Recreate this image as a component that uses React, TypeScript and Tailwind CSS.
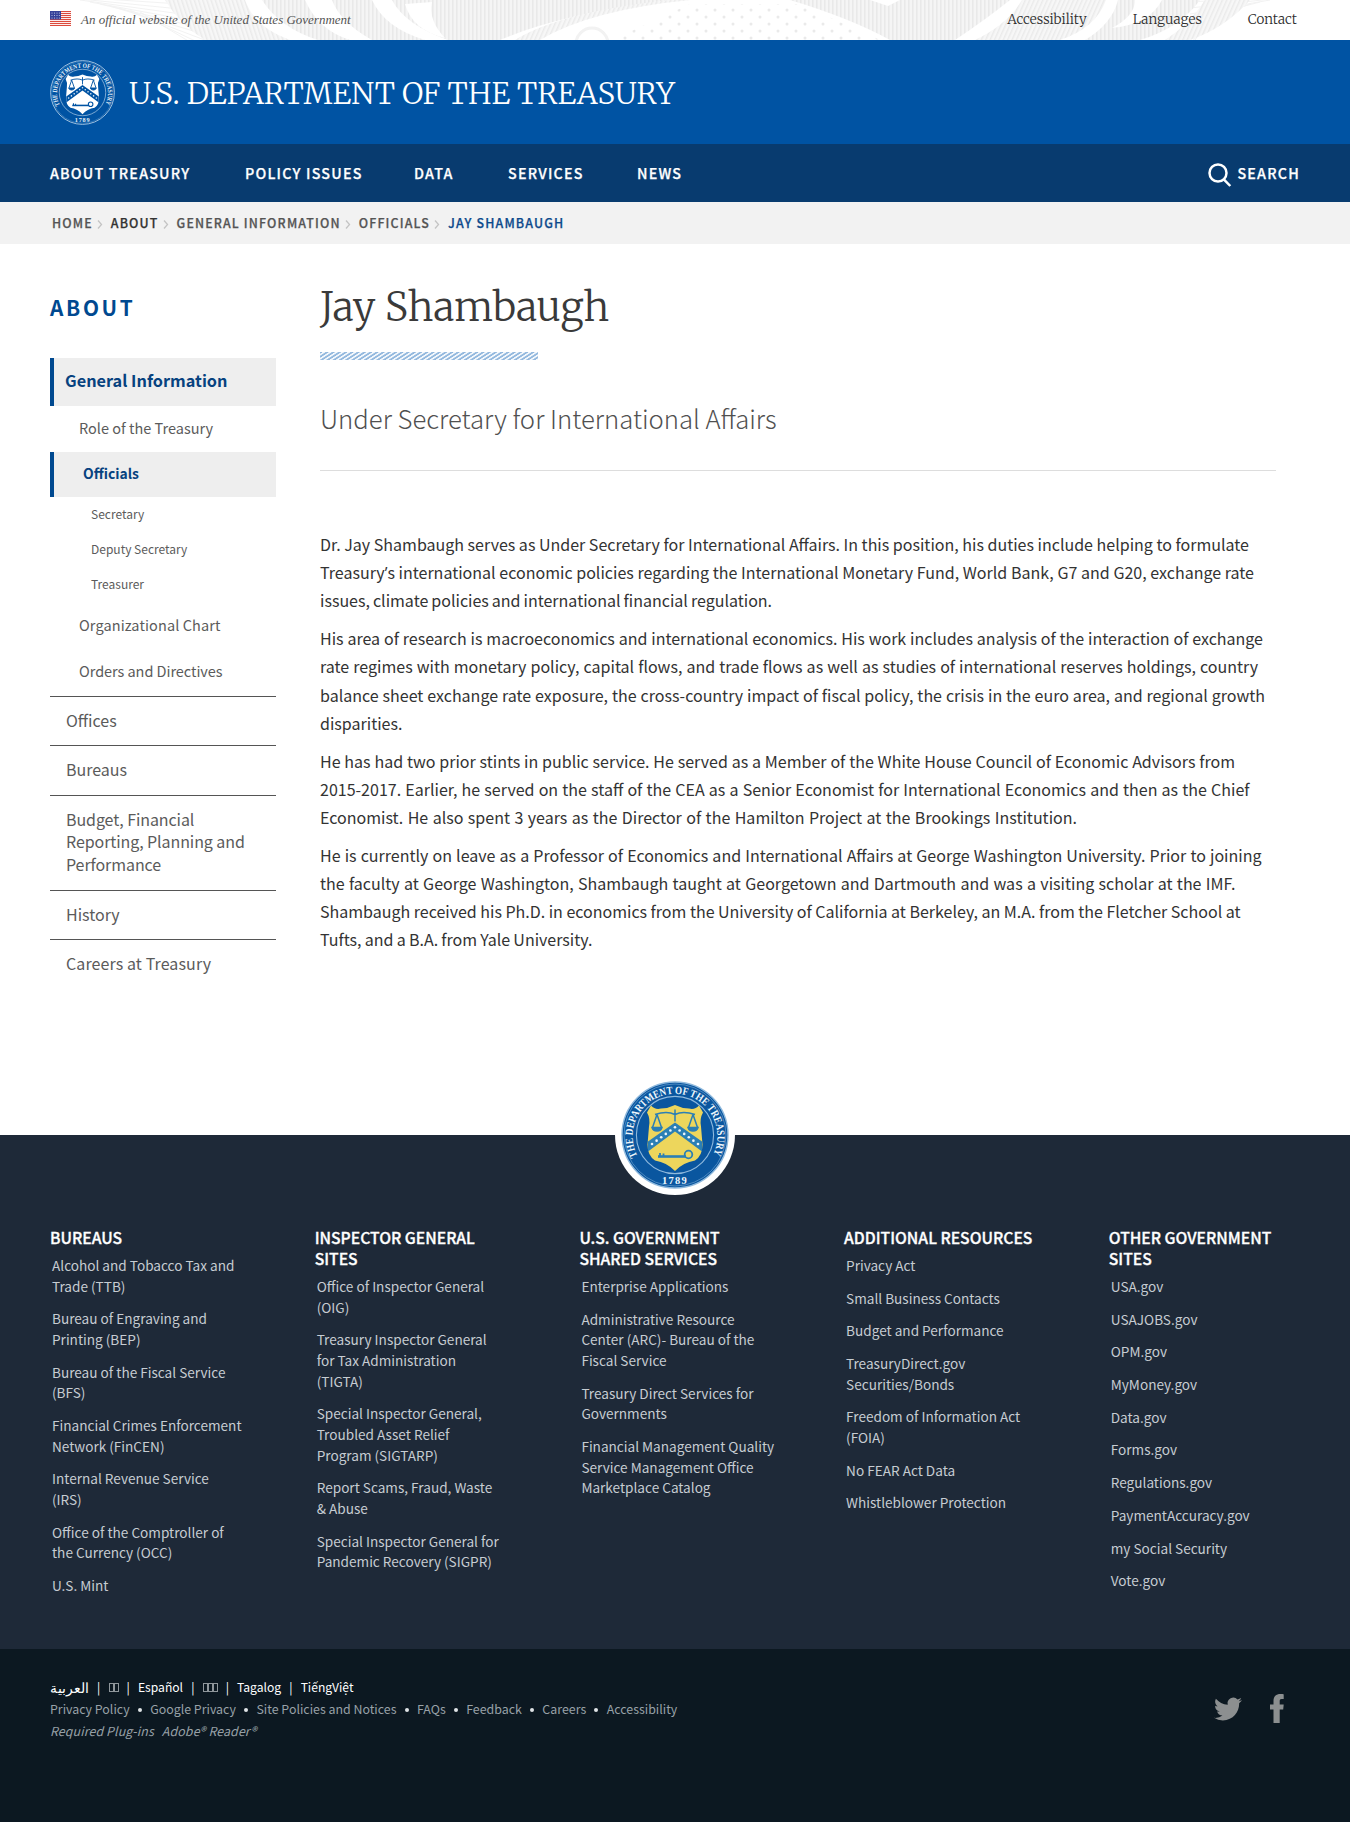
import { Fragment, type ReactNode } from "react";

type SealColors = { field: string; line: string; shield: string; device: string; star: string; ring: string };

function Seal({ id, size, c }: { id: string; size: number; c: SealColors }) {
  return (
    <svg width={size} height={size} viewBox="-54 -54 108 108" className="block shrink-0">
      <defs>
        <path id={id} d="M-37.500 21 A42.4 42.4 0 1 1 37.500 21" />
      </defs>
      <circle r="53" fill={c.field} stroke={c.line} strokeWidth="1.4" />
      <circle r="51" fill="none" stroke={c.ring} strokeWidth="0.8" />
      <circle r="38.6" fill="none" stroke={c.line} strokeWidth="1.1" />
      <text fill={c.star} fontSize="11" fontWeight="700" fontFamily="Liberation Serif, serif">
        <textPath href={`#${id}`} textLength="172" lengthAdjust="spacingAndGlyphs">THE DEPARTMENT OF THE TREASURY</textPath>
      </text>
      <text y="49" textAnchor="middle" fill={c.star} fontSize="10.500" fontWeight="700" letterSpacing="1.2" fontFamily="Liberation Serif, serif">1789</text>
      <g transform="translate(0 1.500)">
        <path d="M-24 -31 Q-20 -26.500 -14 -28 Q-7 -28 0 -31.500 Q7 -28 14 -28 Q20 -26.500 24 -31 L28 -24 Q24.500 -18 26 -10 L27.500 8 Q27.500 19 20 24 Q8 26 0 34.500 Q-8 26 -20 24 Q-27.500 19 -27.500 8 L-26 -10 Q-24.500 -18 -28 -24 Z" fill={c.shield} />
        <path d="M-27 15 L0 -5 L27 15 L27 5 L0 -14 L-27 5 Z" fill={c.device} />
        {[-23, -18.4, -13.8, -9.2, -4.6, 0, 4.6, 9.2, 13.8, 18.4, 23].map((x) => (
          <circle key={x} cx={x} cy={-9.3 + Math.abs(x) * 0.73} r="1.3" fill={c.star} />
        ))}
        <g fill="none" stroke={c.device} strokeWidth="1.5">
          <path d="M-20 -22 Q-8 -26 0 -22 Q8 -26 20 -22 M0 -27 V-15 M-18 -22 L-22.500 -9 M-18 -22 L-13.500 -9 M18 -22 L13.500 -9 M18 -22 L22.500 -9" />
          <path d="M-23 -9 H-13 Q-14 -5.500 -18 -5.500 Q-22 -5.500 -23 -9 Z M23 -9 H13 Q14 -5.500 18 -5.500 Q22 -5.500 23 -9 Z" fill={c.device} />
          <path d="M-17 20 H11" strokeWidth="2.600" />
          <circle cx="13.500" cy="18" r="3.800" strokeWidth="1.800" />
          <path d="M-15 20 V16.500 M-11.500 20 V17" strokeWidth="1.800" />
        </g>
      </g>
    </svg>
  );
}

function Flag() {
  return (
    <svg width="21" height="15" viewBox="0 0 21 15" className="block">
      <rect width="21" height="15" fill="#fff" />
      {[0, 2, 4, 6, 8, 10, 12, 14].map((y) => (
        <rect key={y} y={y} width="21" height="1.1" fill="#dc4a3c" />
      ))}
      <rect width="11" height="8.500" fill="#35429a" />
      {[2, 4.5, 7].map((y) => [2, 4.5, 7, 9.3].map((x) => <circle key={`${x}-${y}`} cx={x} cy={y} r="0.5" fill="#dfe3f5" />))}
    </svg>
  );
}

function Engraving() {
  return (
    <svg className="absolute inset-0 opacity-80" width="1350" height="40" viewBox="0 0 1350 40">
      <defs>
        <pattern id="v" width="4" height="4" patternUnits="userSpaceOnUse">
          <rect width="4" height="4" fill="#f3f3f3" />
          <rect width="1.500" height="4" fill="#e4e4e4" />
        </pattern>
        <pattern id="d" width="4" height="4" patternUnits="userSpaceOnUse" patternTransform="rotate(-18)">
          <rect width="4" height="4" fill="#f6f6f6" />
          <rect width="1.500" height="4" fill="#e6e6e6" />
        </pattern>
        <pattern id="u" width="4" height="4" patternUnits="userSpaceOnUse" patternTransform="rotate(24)">
          <rect width="4" height="4" fill="#f6f6f6" />
          <rect width="1.500" height="4" fill="#e6e6e6" />
        </pattern>
        <pattern id="dots" width="18" height="14" patternUnits="userSpaceOnUse">
          <circle cx="4" cy="3" r="1.500" fill="#e6e6e6" />
          <circle cx="13" cy="10" r="1.500" fill="#e6e6e6" />
        </pattern>
      </defs>
      <g stroke="#f0f0f0" strokeWidth="1">
        {[0, 1, 2, 3, 4, 5, 6, 7, 8].map((i) => (
          <path key={i} d={`M${60 + i * 10} ${-4 + i * 2} L210 ${6 + i * 6} M${1290 - i * 10} ${-4 + i * 2} L1190 ${2 + i * 6}`} />
        ))}
      </g>
      <path d="M165 0 H245 Q255 28 290 40 H205 Q180 25 165 0 Z" fill="url(#d)" />
      <path d="M262 0 H372 Q385 28 425 40 H318 Q280 28 262 0 Z" fill="url(#v)" />
      <path d="M305 0 Q318 30 350 40 H372 Q340 22 332 0 Z" fill="#fff" />
      <path d="M392 0 H488 V40 H448 Q405 25 392 0 Z" fill="url(#v)" />
      <path d="M405 4 Q412 30 445 38 Q428 20 432 2 Z" fill="#fff" />
      <path d="M488 0 H670 Q560 14 500 40 H488 Z" fill="url(#v)" />
      <path d="M540 40 Q590 10 690 0 L670 0 Q560 12 515 40 Z" fill="url(#u)" />
      <circle cx="592" cy="44" r="16" fill="none" stroke="#efefef" strokeWidth="3" />
      <path d="M612 40 L690 4 H800 L880 40 Z" fill="url(#dots)" />
      <path d="M790 0 H930 V40 H890 Q850 18 790 0 Z" fill="url(#v)" />
      <path d="M870 0 H900 L888 6 Z" fill="#fff" />
      <path d="M930 0 H1010 Q985 20 955 40 H920 Z" fill="url(#v)" />
      <path d="M1022 0 H1106 Q1096 28 1060 40 H975 Q1008 24 1022 0 Z" fill="url(#u)" />
      <path d="M1118 0 H1200 Q1180 28 1140 40 H1085 Q1112 24 1118 0 Z" fill="url(#v)" />
      <path d="M1135 0 H1162 Q1150 24 1112 28 Q1135 16 1135 0 Z" fill="#fff" />
      <path d="M1205 0 H1250 Q1225 28 1190 40 H1165 Q1190 24 1205 0 Z" fill="url(#u)" />
    </svg>
  );
}

const nav: [string, string][] = [
  ["ABOUT TREASURY", "w-[195px]"],
  ["POLICY ISSUES", "w-[169px]"],
  ["DATA", "w-[94px]"],
  ["SERVICES", "w-[129px]"],
  ["NEWS", ""],
];

const crumbs = ["HOME", "ABOUT", "GENERAL INFORMATION", "OFFICIALS"];

// Each paragraph is a list of set lines with their measure in pixels.
const paragraphs: [string, number][][] = [
  [
    ["Dr. Jay Shambaugh serves as Under Secretary for International Affairs. In this position, his duties include helping to formulate", 929],
    ["Treasury’s international economic policies regarding the International Monetary Fund, World Bank, G7 and G20, exchange rate", 934],
    ["issues, climate policies and international financial regulation.", 451.5],
  ],
  [
    ["His area of research is macroeconomics and international economics. His work includes analysis of the interaction of exchange", 943],
    ["rate regimes with monetary policy, capital flows, and trade flows as well as studies of international reserves holdings, country", 938],
    ["balance sheet exchange rate exposure, the cross-country impact of fiscal policy, the crisis in the euro area, and regional growth", 945],
    ["disparities.", 81],
  ],
  [
    ["He has had two prior stints in public service. He served as a Member of the White House Council of Economic Advisors from", 915],
    ["2015-2017. Earlier, he served on the staff of the CEA as a Senior Economist for International Economics and then as the Chief", 929.5],
    ["Economist. He also spent 3 years as the Director of the Hamilton Project at the Brookings Institution.", 757],
  ],
  [
    ["He is currently on leave as a Professor of Economics and International Affairs at George Washington University. Prior to joining", 941.5],
    ["the faculty at George Washington, Shambaugh taught at Georgetown and Dartmouth and was a visiting scholar at the IMF.", 915.5],
    ["Shambaugh received his Ph.D. in economics from the University of California at Berkeley, an M.A. from the Fletcher School at", 920.5],
    ["Tufts, and a B.A. from Yale University.", 272.5],
  ],
];

function Prose({ text }: { text: string }) {
  return (
    <>
      {text.split("’").map((part, i) => (
        <Fragment key={i}>
          {i > 0 && <span className="font-['Open_Sans',sans-serif] leading-none">’</span>}
          {part}
        </Fragment>
      ))}
    </>
  );
}

const columns: { title: string; links: string[] }[] = [
  {
    title: "BUREAUS",
    links: ["Alcohol and Tobacco Tax and\nTrade (TTB)", "Bureau of Engraving and\nPrinting (BEP)", "Bureau of the Fiscal Service\n(BFS)", "Financial Crimes Enforcement\nNetwork (FinCEN)", "Internal Revenue Service\n(IRS)", "Office of the Comptroller of\nthe Currency (OCC)", "U.S. Mint"],
  },
  {
    title: "INSPECTOR GENERAL\nSITES",
    links: ["Office of Inspector General\n(OIG)", "Treasury Inspector General\nfor Tax Administration\n(TIGTA)", "Special Inspector General,\nTroubled Asset Relief\nProgram (SIGTARP)", "Report Scams, Fraud, Waste\n& Abuse", "Special Inspector General for\nPandemic Recovery (SIGPR)"],
  },
  {
    title: "U.S. GOVERNMENT\nSHARED SERVICES",
    links: ["Enterprise Applications", "Administrative Resource\nCenter (ARC)- Bureau of the\nFiscal Service", "Treasury Direct Services for\nGovernments", "Financial Management Quality\nService Management Office\nMarketplace Catalog"],
  },
  {
    title: "ADDITIONAL RESOURCES",
    links: ["Privacy Act", "Small Business Contacts", "Budget and Performance", "TreasuryDirect.gov\nSecurities/Bonds", "Freedom of Information Act\n(FOIA)", "No FEAR Act Data", "Whistleblower Protection"],
  },
  {
    title: "OTHER GOVERNMENT\nSITES",
    links: ["USA.gov", "USAJOBS.gov", "OPM.gov", "MyMoney.gov", "Data.gov", "Forms.gov", "Regulations.gov", "PaymentAccuracy.gov", "my Social Security", "Vote.gov"],
  },
];

function Boxes({ n }: { n: number }) {
  return (
    <span className="inline-flex items-center">
      {Array.from({ length: n }, (_, i) => (
        <span key={i} className="h-[9px] w-[5px] border border-[#8f969b]" />
      ))}
    </span>
  );
}

const languages: ReactNode[] = [<span className="text-[14px]">العربية</span>, <Boxes n={2} />, "Español", <Boxes n={3} />, "Tagalog", "TiếngViệt"];
const legal = ["Privacy Policy", "Google Privacy", "Site Policies and Notices", "FAQs", "Feedback", "Careers", "Accessibility"];

export default function App() {
  return (
    <div className="h-[1822px] w-[1350px] overflow-hidden bg-white font-['Noto_Sans_CJK_SC',sans-serif] whitespace-nowrap">
      <div className="relative h-10 bg-white">
        <Engraving />
        <div className="relative flex h-10 items-center pl-[50px]">
          <div className="mb-[3px]"><Flag /></div>
          <span className="ml-[10px] font-['Liberation_Serif',serif] text-[13px] text-[#555] italic">An official website of the United States Government</span>
          <div className="ml-auto flex gap-[46px] pr-[53px] font-['Merriweather',serif] text-[13.5px] font-light text-[#2e2e2e]">
            <span>Accessibility</span>
            <span>Languages</span>
            <span>Contact</span>
          </div>
        </div>
      </div>

      <header className="flex h-[104px] items-center bg-[#0053a3] pl-[50px]">
        <Seal id="seal-top" size={65} c={{ field: "#0053a3", line: "#b9d3ea", shield: "#fff", device: "#0053a3", star: "#e6f0f9", ring: "#5f97cb" }} />
        <span className="ml-[14px] pt-1 font-['Merriweather',serif] text-[29.7px] leading-none font-light text-white">U.S. DEPARTMENT OF THE TREASURY</span>
      </header>

      <nav className="flex h-[58px] items-center bg-[#083b6f] pl-[50px] text-[14.3px] font-medium tracking-[1.2px] text-white [-webkit-text-stroke:0.25px]">
        {nav.map(([label, w]) => (
          <span key={label} className={w}>{label}</span>
        ))}
        <div className="ml-auto flex items-center pr-[50px]">
          <svg width="24" height="24" viewBox="0 0 24 24" fill="none" stroke="#fff" strokeWidth="2.500" className="mt-[3px] mr-[5px]">
            <circle cx="10" cy="10" r="8.500" />
            <path d="M15.800 16.300 L22.300 23" />
          </svg>
          SEARCH
        </div>
      </nav>

      <div className="flex h-[42px] items-center bg-[#f2f2f2] pl-[52px] text-[12.4px] font-medium tracking-[1.15px] text-[#555] [-webkit-text-stroke:0.25px]">
        {crumbs.map((c) => (
          <Fragment key={c}>
            <span className={c === "ABOUT" ? "text-[#333]" : ""}>{c}</span>
            <svg width="6" height="9" viewBox="0 0 6 9" fill="none" stroke="#c4c4c4" strokeWidth="1.300" className="mt-0.5 mr-2 ml-1">
              <path d="M1 0.500 L4.500 4.500 L1 8.500" />
            </svg>
          </Fragment>
        ))}
        <span className="text-[#0d4a8c]">JAY SHAMBAUGH</span>
      </div>

      <div className="flex h-[891px] pl-[50px]">
        <aside className="w-[226px] text-[#5b5b5b]">
          <h2 className="mt-[48px] h-[66px] text-[20.800px] leading-[30px] font-bold tracking-[2.700px] text-[#004990]">ABOUT</h2>
          <div className="flex h-12 items-center border-l-4 border-[#004990] bg-[#eee] pb-1 pl-[11px] text-[16.300px] font-bold text-[#07427f]">General Information</div>
          <div className="flex h-[46px] items-center pb-[3px] pl-[29px] text-[14.500px]">Role of the Treasury</div>
          <div className="flex h-[45px] items-center border-l-4 border-[#004990] bg-[#eee] pb-[3px] pl-[29px] text-[13.900px] font-bold text-[#07427f]">Officials</div>
          <div className="relative -top-px pl-[41px] text-[12px] leading-[35px]">
            <div>Secretary</div>
            <div>Deputy Secretary</div>
            <div>Treasurer</div>
          </div>
          <div className="mb-0.5 pl-[29px] text-[14.500px] leading-[46px]">
            <div className="tracking-[0.1px]">Organizational Chart</div>
            <div className="tracking-[-0.05px]">Orders and Directives</div>
          </div>
          <div className="text-[16px] leading-[22.500px]">
            <div className="flex h-[49px] items-center border-t border-[#555] pb-px pl-4">Offices</div>
            <div className="flex h-[50px] items-center border-t border-[#555] pb-0.5 pl-4">Bureaus</div>
            <div className="flex h-[95px] items-center border-t border-[#555] pb-[3px] pl-4 tracking-[-0.08px] whitespace-pre">{"Budget, Financial\nReporting, Planning and\nPerformance"}</div>
            <div className="flex h-[49px] items-center border-t border-[#555] pb-0.5 pl-4">History</div>
            <div className="flex h-[49px] items-center border-t border-[#555] pb-0.5 pl-4 tracking-[0.1px]">Careers at Treasury</div>
          </div>
        </aside>

        <main className="ml-[44px] w-[956px]">
          <h1 className="mt-[37px] h-[71px] font-['Merriweather',serif] text-[39.500px] leading-[52px] font-light text-[#3a3a3a]">Jay Shambaugh</h1>
          <div className="h-2 w-[218px] bg-[repeating-linear-gradient(147deg,#9dbfe1_0px,#8db4dc_1.200px,#f4f8fc_1.800px,#f4f8fc_2.800px,#9dbfe1_3.400px)]" />
          <div className="mt-[38px] h-[72px] text-[25.700px] leading-[40px] font-light text-[#505050]">Under Secretary for International Affairs</div>
          <div className="h-px bg-[#ddd]" />
          <div className="mt-[59px] flex flex-col gap-[9.800px] text-[16.020px] leading-[28.160px] text-[#333] [word-spacing:-0.6px]">
            {paragraphs.map((lines, i) => (
              <p key={i}>
                {lines.map(([text, width]) => (
                  <span key={text} className="block [text-align-last:justify]" style={{ width }}>
                    <Prose text={text} />
                  </span>
                ))}
              </p>
            ))}
          </div>
        </main>
      </div>

      <footer>
        <div className="relative h-[514px] bg-[#1e2938] pt-[92px] pl-[50px]">
          <div className="absolute top-[-60px] left-[615px] flex size-[120px] items-center justify-center rounded-full bg-white">
            <Seal id="seal-bottom" size={108} c={{ field: "#0a569f", line: "#8fb9dd", shield: "#edd65c", device: "#2b7fb5", star: "#eef6fc", ring: "#5d95c8" }} />
          </div>
          <div className="flex">
            {columns.map((col) => (
              <div key={col.title} className="w-[264.700px] shrink-0 whitespace-pre">
                <h3 className="text-[15.700px] leading-[21px] font-medium text-white [-webkit-text-stroke:0.3px]">{col.title}</h3>
                <ul className="mt-[7px] flex flex-col gap-[12.060px] pl-0.5 text-[13.600px] leading-[20.640px] text-[#c6ccd2]">
                  {col.links.map((l) => (
                    <li key={l}>{l}</li>
                  ))}
                </ul>
              </div>
            ))}
          </div>
        </div>

        <div className="flex h-[173px] bg-[#0c1821] pl-[50px]">
          <div className="pt-[27px] text-[12.400px] leading-[22px] text-[#98a1a7]">
            <div className="flex h-[22px] text-[12.100px] text-white">
              {languages.map((l, i) => (
                <Fragment key={i}>
                  {i > 0 && <span className="w-[19.500px] text-center">|</span>}
                  <span className="flex items-center">{l}</span>
                </Fragment>
              ))}
            </div>
            <div className="flex h-[22px]">
              {legal.map((l, i) => (
                <Fragment key={l}>
                  {i > 0 && (
                    <span className="flex w-[20.500px] items-center justify-center pt-0.5">
                      <span className="size-1 rounded-full bg-[#dfe3e6]" />
                    </span>
                  )}
                  <span>{l}</span>
                </Fragment>
              ))}
            </div>
            <div className="flex h-[22px] gap-2 tracking-[0.1px] italic">
              <span>Required Plug-ins</span>
              <span>Adobe® Reader®</span>
            </div>
          </div>
          <div className="mt-[44px] mr-[66px] ml-auto flex gap-[28px] text-[#8c8f90]">
            <svg width="28" height="28" viewBox="0 0 24 24" fill="currentColor" className="mt-0.5">
              <path d="M23.953 4.570a10 10 0 01-2.825.775 4.958 4.958 0 002.163-2.723c-.951.555-2.005.959-3.127 1.184a4.920 4.920 0 00-8.384 4.482C7.690 8.095 4.067 6.130 1.640 3.162a4.822 4.822 0 00-.666 2.475c0 1.710.870 3.213 2.188 4.096a4.904 4.904 0 01-2.228-.616v.060a4.923 4.923 0 003.946 4.827 4.996 4.996 0 01-2.212.085 4.936 4.936 0 004.604 3.417 9.867 9.867 0 01-6.102 2.105c-.390 0-.779-.023-1.170-.067a13.995 13.995 0 007.557 2.209c9.053 0 13.998-7.496 13.998-13.985 0-.210 0-.420-.015-.630A9.935 9.935 0 0024 4.590z" />
            </svg>
            <svg width="14" height="29" viewBox="0 0 14 29" fill="currentColor" className="mt-px">
              <path d="M3.500 29 V15.500 H0 V10.500 H3.500 V7 C3.500 2.500 6 0 10.500 0 C12 0 13.300 .1 13.700 .2 V5 H11.600 C10 5 9.700 5.800 9.700 7.200 V10.500 H13.700 L13.200 15.500 H9.700 V29 Z" />
            </svg>
          </div>
        </div>
      </footer>
    </div>
  );
}
